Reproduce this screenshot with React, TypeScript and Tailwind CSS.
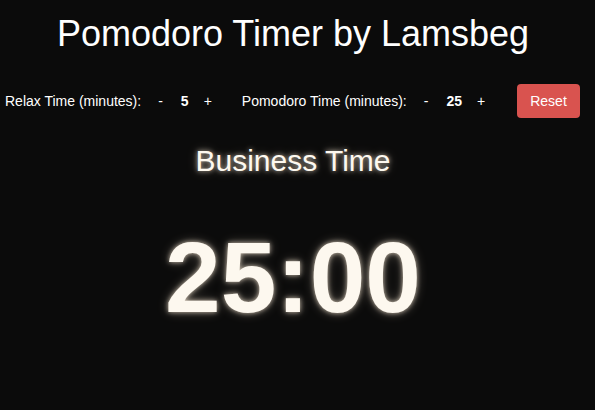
import React, { useState } from 'react'

const glow = '[text-shadow:0_0_5px_rgba(255,240,220,0.75),0_0_12px_rgba(255,235,210,0.3)]'

function Stepper({ label, value, onDec, onInc }: { label: string; value: number; onDec: () => void; onInc: () => void }) {
  return (
    <div className="flex items-center">
      <span>{label}</span>
      <button onClick={onDec} className="ml-[17px]">-</button>
      <span className="ml-[18px] mr-[15px] font-bold">{value}</span>
      <button onClick={onInc}>+</button>
    </div>
  )
}

export default function App() {
  const [relax, setRelax] = useState(5)
  const [work, setWork] = useState(25)

  return (
    <div className="min-h-[410px] w-full bg-[#0b0b0b] text-[#fdf8ef] font-['Liberation_Sans',Arial,sans-serif] overflow-hidden">
      <h1 className="pt-[12px] pr-[9px] text-center text-[36px] leading-[44px] text-white">Pomodoro Timer by Lamsbeg</h1>

      <div className="mt-[28px] flex items-center pl-[5px] pr-[15px] text-[14px] text-white">
        <Stepper label="Relax Time (minutes):" value={relax} onDec={() => setRelax(relax - 1)} onInc={() => setRelax(relax + 1)} />
        <div className="ml-[30px]">
          <Stepper label="Pomodoro Time (minutes):" value={work} onDec={() => setWork(work - 1)} onInc={() => setWork(work + 1)} />
        </div>
        <button
          onClick={() => { setRelax(5); setWork(25) }}
          className="ml-auto h-[34px] w-[63px] rounded-[4px] bg-[#d9534f] text-[14px] text-white"
        >
          Reset
        </button>
      </div>

      <div className="mt-[24px] pr-[9px] text-center">
        <h2 className={`text-[30px] leading-[38px] ${glow}`}>Business Time</h2>
        <div className={`mt-[42px] text-[100px] font-bold leading-[110px] ${glow}`}>
          {String(work).padStart(2, '0')}:00
        </div>
      </div>
    </div>
  )
}
